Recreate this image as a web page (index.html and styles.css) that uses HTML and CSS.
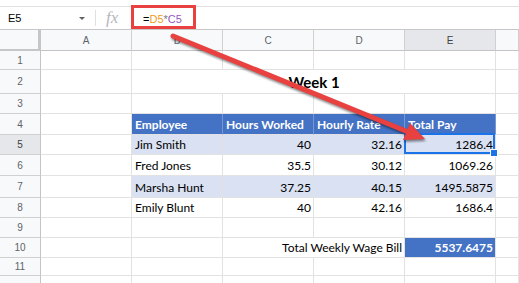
FILE: index.html
```html
<!DOCTYPE html>
<html>
<head>
<meta charset="utf-8">
<link rel="stylesheet" href="styles.css">
</head>
<body>
<div class="app">
  <div class="strip"></div>
  <div class="fbar">
    <div class="namebox"><span class="nb-text">E5</span><span class="caret"></span></div>
    <div class="sep"></div>
    <div class="fx">fx</div>
    <div class="formula"><span class="eq">=</span><span class="ref1">D5</span><span class="op">*</span><span class="ref2">C5</span></div>
  </div>
  <div class="sheet">
    <div class="corner"></div><div class="ch">A</div><div class="ch">B</div><div class="ch">C</div><div class="ch">D</div><div class="ch sel">E</div><div class="ch"></div>

    <div class="rh">1</div><div class="c"></div><div class="c"></div><div class="c"></div><div class="c"></div><div class="c"></div><div class="c"></div>

    <div class="rh">2</div><div class="c"></div><div class="c title span4">Week 1</div><div class="c"></div>

    <div class="rh">3</div><div class="c"></div><div class="c"></div><div class="c"></div><div class="c"></div><div class="c"></div><div class="c"></div>

    <div class="rh">4</div><div class="c"></div><div class="c th">Employee</div><div class="c th">Hours Worked</div><div class="c th">Hourly Rate</div><div class="c th">Total Pay</div><div class="c"></div>

    <div class="rh sel">5</div><div class="c"></div><div class="c band">Jim Smith</div><div class="c band num">40</div><div class="c band num">32.16</div><div class="c band num active">1286.4</div><div class="c"></div>

    <div class="rh">6</div><div class="c"></div><div class="c">Fred Jones</div><div class="c num">35.5</div><div class="c num">30.12</div><div class="c num">1069.26</div><div class="c"></div>

    <div class="rh">7</div><div class="c"></div><div class="c band">Marsha Hunt</div><div class="c band num">37.25</div><div class="c band num">40.15</div><div class="c band num">1495.5875</div><div class="c"></div>

    <div class="rh">8</div><div class="c"></div><div class="c">Emily Blunt</div><div class="c num">40</div><div class="c num">42.16</div><div class="c num">1686.4</div><div class="c"></div>

    <div class="rh">9</div><div class="c"></div><div class="c"></div><div class="c"></div><div class="c"></div><div class="c"></div><div class="c"></div>

    <div class="rh">10</div><div class="c"></div><div class="c"></div><div class="c num span2">Total Weekly Wage Bill</div><div class="c num total">5537.6475</div><div class="c"></div>

    <div class="rh">11</div><div class="c"></div><div class="c"></div><div class="c"></div><div class="c"></div><div class="c"></div><div class="c"></div>

    <div class="rh"></div><div class="c"></div><div class="c"></div><div class="c"></div><div class="c"></div><div class="c"></div><div class="c"></div>
  </div>
  <div class="callout"></div>
  <svg class="arrow" width="519" height="283" viewBox="0 0 519 283">
    <defs>
      <filter id="sh" x="-10%" y="-10%" width="120%" height="140%">
        <feGaussianBlur stdDeviation="1.2"/>
      </filter>
    </defs>
    <g filter="url(#sh)" opacity="0.45" transform="translate(1,2)">
      <line x1="173" y1="36" x2="407" y2="131.5" stroke="#000" stroke-width="5" stroke-linecap="round"/>
      <polygon points="425,139 403,140 410,123" fill="#000"/>
    </g>
    <line x1="173" y1="36" x2="407" y2="131.5" stroke="#e8413f" stroke-width="5" stroke-linecap="round"/>
    <polygon points="425,139 403,140 410,123" fill="#e8413f"/>
  </svg>
</div>
</body>
</html>
```
FILE: styles.css
```css
* { box-sizing: border-box; }
html, body { margin: 0; padding: 0; background: #fff; }
.app {
  position: relative;
  width: 519px;
  height: 283px;
  overflow: hidden;
  font-family: Arial, "Liberation Sans", sans-serif;
}
.strip {
  height: 7px;
  border-bottom: 1px solid #e0e0e0;
}
.fbar {
  height: 23px;
  border-bottom: 1px solid #c7c7c7;
  display: flex;
  align-items: center;
}
.namebox {
  width: 95px;
  padding-left: 8px;
  display: flex;
  align-items: center;
}
.nb-text {
  font-size: 11px;
  color: #000;
}
.caret {
  margin-left: auto;
  margin-right: 10px;
  width: 0;
  height: 0;
  border-left: 3px solid transparent;
  border-right: 3px solid transparent;
  border-top: 3px solid #5f6368;
}
.sep {
  width: 1px;
  height: 16px;
  background: #e0e0e0;
}
.fx {
  margin-left: 10px;
  width: 37px;
  font-family: "Liberation Serif", serif;
  font-style: italic;
  font-size: 17px;
  color: #b5b8bc;
  line-height: 20px;
}
.formula {
  font-size: 11px;
  color: #000;
  padding-top: 1px;
}
.ref1 { color: #f09b23; }
.op { color: #7a7a7a; }
.ref2 { color: #9a55c0; }

.sheet {
  display: grid;
  grid-template-columns: 41px repeat(5, 91px) 1fr;
  grid-template-rows: 21px 19px 24px 20px 21px 20px 21px 22px 20px 20px 20px 18px 21px;
}
.corner {
  background: #f8f9fa;
  border-right: 3px solid #c4c6c8;
  border-bottom: 2px solid #c4c6c8;
}
.ch {
  background: #f8f9fa;
  border-right: 1px solid #d0d0d0;
  border-bottom: 1px solid #c4c4c4;
  display: flex;
  align-items: center;
  justify-content: center;
  font-size: 10px;
  color: #5f6368;
}
.ch.sel { background: #e6e7ea; color: #3c4043; }
.rh {
  background: #f8f9fa;
  border-right: 1px solid #c4c4c4;
  border-bottom: 1px solid #d0d0d0;
  display: flex;
  align-items: center;
  justify-content: center;
  font-size: 10px;
  color: #5f6368;
}
.rh.sel { background: #e6e7ea; color: #3c4043; }
.c {
  position: relative;
  border-right: 1px solid #e2e2e2;
  border-bottom: 1px solid #e2e2e2;
  display: flex;
  align-items: flex-end;
  padding: 0 2px 2px 3px;
  font-family: Lato, "Open Sans", sans-serif;
  font-size: 12px;
  line-height: 14px;
  color: #000;
  white-space: nowrap;
}
.num { justify-content: flex-end; }
.span4 { grid-column: span 4; }
.span2 { grid-column: span 2; }
.title {
  justify-content: center;
  font-weight: 700;
  font-size: 15px;
  line-height: 18px;
}
.th {
  background: #4472c4;
  color: #fff;
  font-weight: 700;
  border-right-color: #7896d3;
}
.band { background: #d9e1f2; }
.total {
  background: #4472c4;
  color: #fff;
  font-weight: 700;
}
.active::after {
  content: "";
  position: absolute;
  left: -1px;
  top: -2px;
  right: 0;
  bottom: 0;
  border: 2px solid #1a73e8;
}
.active::before {
  content: "";
  position: absolute;
  right: -3px;
  bottom: -3px;
  width: 6px;
  height: 6px;
  background: #1a73e8;
  border: 1px solid #fff;
  z-index: 2;
}
.callout {
  position: absolute;
  left: 131px;
  top: 5px;
  width: 65px;
  height: 24px;
  border: 3px solid #e8413f;
}
.arrow {
  position: absolute;
  left: 0;
  top: 0;
  pointer-events: none;
}
```
